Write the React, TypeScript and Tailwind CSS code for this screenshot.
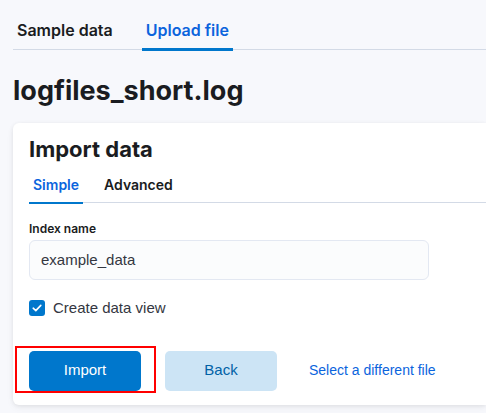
import React, { useState } from 'react';

const inter = { fontFamily: 'Inter, "Noto Sans", sans-serif' };

export default function App() {
  const [tab, setTab] = useState<'simple' | 'advanced'>('simple');
  const [createView, setCreateView] = useState(true);

  return (
    <div className="min-h-screen w-[486px] h-[413px] overflow-hidden bg-[#f7f8fc] text-[#1a1c21]" style={{ fontFamily: '"Liberation Sans", Arial, sans-serif' }}>
      <div className="pl-[13px] pt-[13px]">
        <div className="flex items-start border-b border-[#d3dae6] h-[37px]" style={inter}>
          <button className="flex items-start px-[4px] text-[16px] leading-[20px] font-semibold text-[#1a1c21] h-[37px] pt-[7px]">
            Sample data
          </button>
          <button className="flex items-start ml-[25px] px-[4px] text-[16px] leading-[20px] font-semibold text-[#0b64dd] h-[38px] pt-[7px] border-b-[3px] border-[#0077cc]">
            Upload file
          </button>
        </div>

        <h1 className="mt-[25px] text-[27px] leading-[32px] font-bold" style={inter}>logfiles_short.log</h1>

        <div className="mt-[16px] bg-white rounded-l-[6px] shadow-[0_1px_4px_rgba(0,0,0,0.08),0_3px_8px_rgba(0,0,0,0.04)] pl-[16px] pt-[11px] pb-[12px]">
          <h2 className="text-[22px] leading-[30px] font-bold" style={inter}>Import data</h2>
          <div className="mt-[3px] flex items-start border-b border-[#d3dae6] h-[36px]" style={inter}>
            <button onClick={() => setTab('simple')} className={`flex items-start px-[4px] text-[14px] leading-[18px] font-semibold h-[37px] pt-[9px] ${tab === 'simple' ? 'text-[#0b64dd] border-b-[2px] border-[#0077cc]' : 'text-[#1a1c21]'}`}>
              Simple
            </button>
            <button onClick={() => setTab('advanced')} className={`flex items-start ml-[17px] px-[4px] text-[14px] leading-[18px] font-semibold h-[37px] pt-[9px] ${tab === 'advanced' ? 'text-[#0b64dd] border-b-[2px] border-[#0077cc]' : 'text-[#1a1c21]'}`}>
              Advanced
            </button>
          </div>

          <label className="block mt-[18px] text-[12px] font-semibold leading-[16px]" style={inter}>Index name</label>
          <div className="mt-[3px] w-[400px] h-[40px] rounded-[6px] bg-[#fbfcfd] border border-[#e3e8f2] flex items-center px-[11px] text-[15px] text-[#343741]">
            example_data
          </div>

          <label className="mt-[17px] flex items-center gap-[8px] cursor-pointer">
            <span onClick={() => setCreateView(!createView)} className={`w-[16px] h-[16px] rounded-[3px] flex items-center justify-center ${createView ? 'bg-[#0077cc]' : 'bg-white border border-[#98a2b3]'}`}>
              {createView && (
                <svg width="10" height="8" viewBox="0 0 10 8" fill="none">
                  <path d="M1.2 4.2 L3.8 6.6 L8.8 1.4" stroke="white" strokeWidth="1.6" strokeLinecap="round" strokeLinejoin="round" />
                </svg>
              )}
            </span>
            <span className="text-[15px] text-[#343741]">Create data view</span>
          </label>

          <div className="mt-[26px] flex items-center ml-[-14px]">
            <div className="border-2 border-[#ff0000] pt-[3px] pl-[12px] pr-[13px]">
              <button className="block w-[112px] h-[40px] rounded-[5px] bg-[#0077cc] text-white text-[15px]">Import</button>
            </div>
            <button className="ml-[9px] mt-[3px] w-[112px] h-[40px] rounded-[5px] bg-[#cce4f5] text-[#0061a6] text-[15px]">Back</button>
            <button className="ml-[32px] mt-[3px] text-[14px] text-[#0b64dd]">Select a different file</button>
          </div>
        </div>
      </div>
    </div>
  );
}
